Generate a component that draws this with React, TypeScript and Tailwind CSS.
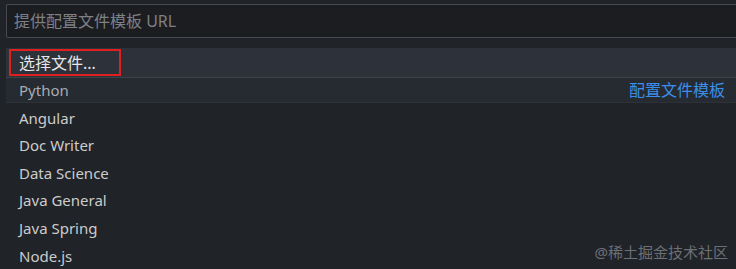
const items = ["Angular", "Doc Writer", "Data Science", "Java General", "Java Spring", "Node.js"];

export default function App() {
  return (
    <div
      className="h-[269px] w-[736px] overflow-hidden bg-[#202328] text-[15px] text-[#cccccc]"
      style={{ fontFamily: '"Noto Sans", "Noto Sans CJK SC", sans-serif' }}
    >
      <div className="pl-[6px] pt-[4px]">
        <div className="flex h-[34px] items-center rounded-l-[2px] border border-r-0 border-[#474a50] bg-[#1c1d21] pl-[7px] text-[16px] text-[#7d8086]">
          提供配置文件模板 URL
        </div>
      </div>

      <div className="mt-[10px] pl-[6px]">
        <div className="flex h-[29px] items-center bg-[#2c313a] pl-[3px]">
          <div className="flex h-[27px] w-[112px] items-center border-2 border-[#e0201e] pl-[8px] text-[16px] text-[#e6e6e6]">
            选择文件...
          </div>
        </div>
        <div className="h-px bg-[#3d414a]" />
        <div className="flex h-[25px] items-center justify-between border-b border-[#2e3138] bg-[#262a31] pl-[13px] pr-[11px]">
          <span className="text-[#a9abb0]">Python</span>
          <span className="text-[16px] text-[#3b8eea]">配置文件模板</span>
        </div>
      </div>

      <div className="pl-[19px] pt-px">
        {items.map((item) => (
          <div key={item} className="flex h-[27.6px] items-center">
            {item}
          </div>
        ))}
      </div>

      <div className="relative">
        <span className="absolute bottom-[6px] right-[8px] text-[15px] text-[#6c6f75]">@稀土掘金技术社区</span>
      </div>
    </div>
  );
}
